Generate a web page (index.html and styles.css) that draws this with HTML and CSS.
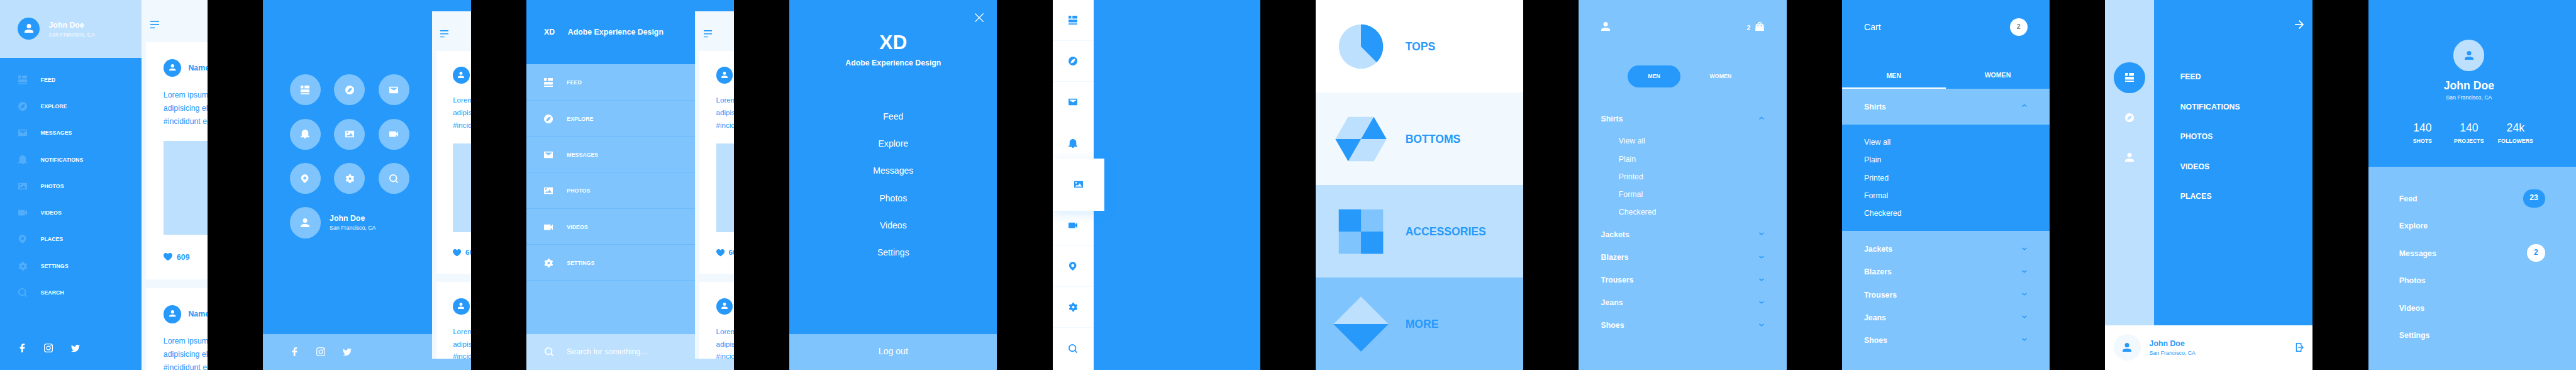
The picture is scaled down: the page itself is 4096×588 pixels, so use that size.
FILE: index.html
```html
<!DOCTYPE html>
<html lang="en">
<head>
<meta charset="utf-8">
<title>Mobile navigation screens</title>
<link rel="stylesheet" href="styles.css">
</head>
<body>
<svg class="sprite" aria-hidden="true">
  <symbol id="feed" viewBox="0 0 16 16"><path d="M0 0h5v5H0zM7 0h9v5H7zM0 7h16v5H0zM0 14h16v2H0z"/></symbol>
  <symbol id="compass" viewBox="0 0 16 16"><path fill-rule="evenodd" d="M8 0a8 8 0 1 1 0 16A8 8 0 0 1 8 0zM12.3 3.8C9.500 4.500 7.300 5.200 6.200 6.400 5.200 7.500 4.500 9.500 3.700 12.200 6.500 11.500 8.700 10.800 9.800 9.600 10.800 8.500 11.500 6.500 12.300 3.800z"/></symbol>
  <symbol id="mail" viewBox="0 0 16 16"><path fill-rule="evenodd" d="M1 2h14a1 1 0 0 1 1 1v10a1 1 0 0 1-1 1H1a1 1 0 0 1-1-1V3a1 1 0 0 1 1-1zM2 4v.8l6 3.900 6-3.900V4z"/></symbol>
  <symbol id="bell" viewBox="0 0 16 16"><path d="M2 11V6.500C2 2.500 4.500 0 8 0s6 2.500 6 6.500V11c0 .8 2 .8 2 1.800V14h-6c0 1.200-.8 2-2 2s-2-.8-2-2H0v-1.200c0-1 2-1 2-1.800z"/></symbol>
  <symbol id="photo" viewBox="0 0 16 16"><path fill-rule="evenodd" d="M.5 2h15a.5.5 0 0 1 .5.5v11a.5.5 0 0 1-.5.5H.5a.5.5 0 0 1-.5-.5v-11A.5.5 0 0 1 .5 2zM3.500 3.500a1.500 1.500 0 1 0 0 3 1.500 1.500 0 0 0 0-3zM2 12h12l-4-6-3 4-3-1z"/></symbol>
  <symbol id="video" viewBox="0 0 16 16"><path d="M.8 3h10.400a.8.8 0 0 1 .8.8V7l3.200-3.500.8-.3v9.600l-.8-.3L12 9v3.200a.8.8 0 0 1-.8.8H.8a.8.8 0 0 1-.8-.8V3.800A.8.8 0 0 1 .8 3z"/></symbol>
  <symbol id="pin" viewBox="0 0 16 16"><path fill-rule="evenodd" d="M7.600 0a6.600 6.600 0 0 1 6.600 6.600c0 4-4.600 7.600-6.600 9.400C5.600 14.200 1 10.600 1 6.600A6.600 6.600 0 0 1 7.600 0zM7.600 4a2.800 2.800 0 1 0 0 5.600 2.800 2.800 0 0 0 0-5.600z"/></symbol>
  <symbol id="gear" viewBox="-8.500 -8 16 16"><path fill-rule="evenodd" d="M-1.500-8h3l.5 2.100 2.100 1.200 2.100-.6 1.500 2.600-1.600 1.500v2.400l1.600 1.500-1.500 2.600-2.100-.6L2 5.900 1.500 8h-3L-2 5.900l-2.100-1.200-2.100.6-1.500-2.600 1.600-1.500v-2.400l-1.600-1.500 1.500-2.600 2.100.6L-2-5.900zM0-2.300a2.300 2.300 0 1 0 0 4.600 2.300 2.300 0 0 0 0-4.600z"/></symbol>
  <symbol id="search" viewBox="0 0 16 16"><g fill="none" stroke="currentColor" stroke-width="2"><circle cx="7" cy="7" r="6"/><path d="M11.300 11.300l4 4"/></g></symbol>
  <symbol id="person" viewBox="0 0 16 16"><circle cx="8" cy="4" r="4"/><path d="M0 16v-2c0-2.600 4-3.900 8-3.900s8 1.300 8 3.900v2z"/></symbol>
  <symbol id="heart" viewBox="0 0 16 14"><path d="M8 14C5 11.800 0 8.500 0 4.300 0 1.800 1.900 0 4.200 0 5.900 0 7.200.7 8 1.900 8.800.7 10.100 0 11.800 0 14.100 0 16 1.800 16 4.300 16 8.500 11 11.800 8 14z"/></symbol>
  <symbol id="facebook" viewBox="-3.700 0 16 16"><path d="M6 16V9h3l.4-3H6V4.200c0-.9.3-1.500 1.600-1.500h1.500V.1C8.800.1 7.900 0 6.900 0 4.500 0 2.900 1.400 2.900 4v2H.3v3h2.600v7z"/></symbol>
  <symbol id="instagram" viewBox="0 0 16 16"><g fill="none" stroke="currentColor" stroke-width="1.500"><rect x=".75" y=".75" width="14.500" height="14.500" rx="3.800"/><circle cx="8" cy="8" r="3.400"/></g><circle cx="12.300" cy="3.700" r="1"/></symbol>
  <symbol id="twitter" viewBox="0 0 16 16"><path d="M5.026 15c6.038 0 9.341-5.003 9.341-9.334 0-.14 0-.282-.006-.422A6.685 6.685 0 0 0 16 3.542a6.658 6.658 0 0 1-1.889.518 3.301 3.301 0 0 0 1.447-1.817 6.533 6.533 0 0 1-2.087.793A3.286 3.286 0 0 0 7.875 6.030a9.325 9.325 0 0 1-6.767-3.429 3.289 3.289 0 0 0 1.018 4.382A3.323 3.323 0 0 1 .64 6.575v.045a3.288 3.288 0 0 0 2.632 3.218 3.203 3.203 0 0 1-.865.115 3.230 3.230 0 0 1-.614-.057 3.283 3.283 0 0 0 3.067 2.277A6.588 6.588 0 0 1 .78 13.580a6.320 6.320 0 0 1-.78-.045A9.344 9.344 0 0 0 5.026 15z"/></symbol>
  <symbol id="bag" viewBox="0 0 16 16"><path fill-rule="evenodd" d="M1.500 4H4a4 4 0 0 1 8 0h2.500q.5 0 .6.500L16 15.300q0 .7-.7.7H.7q-.7 0-.7-.7L.9 4.500Q1 4 1.500 4zM6 4h4a2 2 0 0 0-4 0zM4 5.700v1.900h2V5.700zM10 5.700v1.900h2V5.700z"/></symbol>
  <symbol id="chevron" viewBox="0 0 9 6"><path fill="none" stroke="currentColor" stroke-width="1.800" d="M.6 1l3.900 3.300L8.400 1"/></symbol>
  <symbol id="close" viewBox="0 0 16 16"><path fill="none" stroke="currentColor" stroke-width="1.500" d="M.5.5l15 15M15.500.5l-15 15"/></symbol>
  <symbol id="arrow" viewBox="0 0 16 16"><path fill="none" stroke="currentColor" stroke-width="2" d="M0 8h14.500M7.500.8L14.700 8l-7.200 7.200"/></symbol>
  <symbol id="logout" viewBox="0 0 16 16"><path fill="none" stroke="currentColor" stroke-width="1.800" d="M11 3.500V.9H2.900v14.200H11v-2.600M6 8h9M10.600 3.900L14.700 8l-4.100 4.100"/></symbol>
  <symbol id="menu" viewBox="0 0 16 14"><path d="M0 0h16v2H0zM0 6h16v2H0zM0 12h8v2H0z"/></symbol>
</svg>

<main class="board">

  <section class="screen s1">
    <div class="s1-side">
      <header class="s1-head">
        <span class="disc disc40"><svg class="i"><use href="#person"/></svg></span>
        <div class="who"><b>John Doe</b><small>San Francisco, CA</small></div>
      </header>
      <nav class="s1-nav">
        <a><svg class="i"><use href="#feed"/></svg>FEED</a>
        <a><svg class="i"><use href="#compass"/></svg>EXPLORE</a>
        <a><svg class="i"><use href="#mail"/></svg>MESSAGES</a>
        <a><svg class="i"><use href="#bell"/></svg>NOTIFICATIONS</a>
        <a><svg class="i"><use href="#photo"/></svg>PHOTOS</a>
        <a><svg class="i"><use href="#video"/></svg>VIDEOS</a>
        <a><svg class="i"><use href="#pin"/></svg>PLACES</a>
        <a><svg class="i"><use href="#gear"/></svg>SETTINGS</a>
        <a><svg class="i"><use href="#search"/></svg>SEARCH</a>
      </nav>
      <footer class="social"><svg class="i"><use href="#facebook"/></svg><svg class="i"><use href="#instagram"/></svg><svg class="i"><use href="#twitter"/></svg></footer>
    </div>
    <div class="preview">
      <svg class="burger"><use href="#menu"/></svg>
      <article class="card">
        <div class="card-top"><span class="disc disc32"><svg class="i12"><use href="#person"/></svg></span><b>Name</b></div>
        <p>Lorem ipsum<br>adipisicing elit<br>#incididunt enim</p>
        <div class="pic"></div>
        <div class="likes"><svg class="heart"><use href="#heart"/></svg><b>609</b></div>
      </article>
      <article class="card">
        <div class="card-top"><span class="disc disc32"><svg class="i12"><use href="#person"/></svg></span><b>Name</b></div>
        <p>Lorem ipsum<br>adipisicing elit<br>#incididunt enim</p>
      </article>
    </div>
  </section>

  <section class="screen s2">
    <div class="s2-body">
      <div class="s2-grid">
        <span class="disc disc56 mid"><svg class="i"><use href="#feed"/></svg></span>
        <span class="disc disc56 mid"><svg class="i"><use href="#compass"/></svg></span>
        <span class="disc disc56 mid"><svg class="i"><use href="#mail"/></svg></span>
        <span class="disc disc56 mid"><svg class="i"><use href="#bell"/></svg></span>
        <span class="disc disc56 mid"><svg class="i"><use href="#photo"/></svg></span>
        <span class="disc disc56 mid"><svg class="i"><use href="#video"/></svg></span>
        <span class="disc disc56 mid"><svg class="i"><use href="#pin"/></svg></span>
        <span class="disc disc56 mid"><svg class="i"><use href="#gear"/></svg></span>
        <span class="disc disc56 mid"><svg class="i"><use href="#search"/></svg></span>
      </div>
      <div class="s2-user"><span class="disc disc56 mid"><svg class="i"><use href="#person"/></svg></span><div class="who"><b>John Doe</b><small>San Francisco, CA</small></div></div>
    </div>
    <footer class="bar64 social"><svg class="i"><use href="#facebook"/></svg><svg class="i"><use href="#instagram"/></svg><svg class="i"><use href="#twitter"/></svg></footer>
    <div class="preview floating">
      <svg class="burger"><use href="#menu"/></svg>
      <article class="card">
        <div class="card-top"><span class="disc disc32"><svg class="i12"><use href="#person"/></svg></span></div>
        <p>Lorem ipsum<br>adipisicing elit<br>#incididunt enim</p>
        <div class="pic"></div>
        <div class="likes"><svg class="heart"><use href="#heart"/></svg><b>609</b></div>
      </article>
      <article class="card">
        <div class="card-top"><span class="disc disc32"><svg class="i12"><use href="#person"/></svg></span></div>
        <p>Lorem ipsum<br>adipisicing elit<br>#incididunt enim</p>
      </article>
    </div>
  </section>

  <section class="screen s3">
    <header class="s3-head"><b class="s3-logo">XD</b><b>Adobe Experience Design</b></header>
    <nav class="s3-nav">
      <a><svg class="i"><use href="#feed"/></svg>FEED</a>
      <a><svg class="i"><use href="#compass"/></svg>EXPLORE</a>
      <a><svg class="i"><use href="#mail"/></svg>MESSAGES</a>
      <a><svg class="i"><use href="#photo"/></svg>PHOTOS</a>
      <a><svg class="i"><use href="#video"/></svg>VIDEOS</a>
      <a><svg class="i"><use href="#gear"/></svg>SETTINGS</a>
    </nav>
    <footer class="bar64 s3-search"><svg class="i"><use href="#search"/></svg>Search for something…</footer>
    <div class="preview floating">
      <svg class="burger"><use href="#menu"/></svg>
      <article class="card">
        <div class="card-top"><span class="disc disc32"><svg class="i12"><use href="#person"/></svg></span></div>
        <p>Lorem ipsum<br>adipisicing elit<br>#incididunt enim</p>
        <div class="pic"></div>
        <div class="likes"><svg class="heart"><use href="#heart"/></svg><b>609</b></div>
      </article>
      <article class="card">
        <div class="card-top"><span class="disc disc32"><svg class="i12"><use href="#person"/></svg></span></div>
        <p>Lorem ipsum<br>adipisicing elit<br>#incididunt enim</p>
      </article>
    </div>
  </section>

  <section class="screen s4">
    <svg class="i s4-close"><use href="#close"/></svg>
    <b class="s4-logo">XD</b>
    <b class="s4-name">Adobe Experience Design</b>
    <nav class="s4-nav"><a>Feed</a><a>Explore</a><a>Messages</a><a>Photos</a><a>Videos</a><a>Settings</a></nav>
    <footer class="bar64 s4-out">Log out</footer>
  </section>

  <section class="screen s5">
    <nav class="s5-rail">
      <a><svg class="i"><use href="#feed"/></svg></a>
      <a><svg class="i"><use href="#compass"/></svg></a>
      <a><svg class="i"><use href="#mail"/></svg></a>
      <a><svg class="i"><use href="#bell"/></svg></a>
      <a class="active"><svg class="i"><use href="#photo"/></svg></a>
      <a><svg class="i"><use href="#video"/></svg></a>
      <a><svg class="i"><use href="#pin"/></svg></a>
      <a><svg class="i"><use href="#gear"/></svg></a>
      <a><svg class="i"><use href="#search"/></svg></a>
    </nav>
  </section>

  <section class="screen s6">
    <div class="cat cat1"><svg class="shape" viewBox="-50 -50 100 100"><circle class="f3" r="40"/><path class="f1" d="M0 0V-40A40 40 0 0 1 28.280 28.280z"/></svg>TOPS</div>
    <div class="cat cat2"><svg class="shape" viewBox="-50 -50 100 100"><path class="f3" d="M-46.200 0l23.100-40h46.200L46.200 0 23.100 40h-46.200z"/><path class="f1" d="M0 0l23.100-40L46.200 0zM0 0l-23.100 40L-46.200 0z"/></svg>BOTTOMS</div>
    <div class="cat cat3"><svg class="shape" viewBox="-50 -50 100 100"><path class="f2" d="M-40-40h80v80h-80z"/><path class="f1" d="M-40-40H0V0h-40zM0 0h40v40H0z"/></svg>ACCESSORIES</div>
    <div class="cat cat4"><svg class="shape" viewBox="-50 -50 100 100"><path class="f3" d="M-49.700 0L0-49.700 49.700 0z"/><path class="f1" d="M-49.700 0L0 49.700 49.700 0z"/></svg>MORE</div>
  </section>

  <section class="screen s7">
    <header class="s7-head"><svg class="i"><use href="#person"/></svg><span class="s7-bag"><b>2</b><svg class="i"><use href="#bag"/></svg></span></header>
    <div class="s7-tabs"><b class="on">MEN</b><b>WOMEN</b></div>
    <div class="acc">
      <div class="acc-row open">Shirts<svg class="chev"><use href="#chevron"/></svg></div>
      <div class="acc-sub indent"><a>View all</a><a>Plain</a><a>Printed</a><a>Formal</a><a>Checkered</a></div>
      <div class="acc-row">Jackets<svg class="chev"><use href="#chevron"/></svg></div>
      <div class="acc-row">Blazers<svg class="chev"><use href="#chevron"/></svg></div>
      <div class="acc-row">Trousers<svg class="chev"><use href="#chevron"/></svg></div>
      <div class="acc-row">Jeans<svg class="chev"><use href="#chevron"/></svg></div>
      <div class="acc-row">Shoes<svg class="chev"><use href="#chevron"/></svg></div>
    </div>
  </section>

  <section class="screen s8">
    <header class="s8-head">Cart<b class="badge gray">2</b></header>
    <div class="s8-tabs"><b class="on">MEN</b><b>WOMEN</b></div>
    <div class="acc-row open strip">Shirts<svg class="chev"><use href="#chevron"/></svg></div>
    <div class="acc-sub s8-sub"><a>View all</a><a>Plain</a><a>Printed</a><a>Formal</a><a>Checkered</a></div>
    <div class="s8-rest">
      <div class="acc-row">Jackets<svg class="chev"><use href="#chevron"/></svg></div>
      <div class="acc-row">Blazers<svg class="chev"><use href="#chevron"/></svg></div>
      <div class="acc-row">Trousers<svg class="chev"><use href="#chevron"/></svg></div>
      <div class="acc-row">Jeans<svg class="chev"><use href="#chevron"/></svg></div>
      <div class="acc-row">Shoes<svg class="chev"><use href="#chevron"/></svg></div>
    </div>
  </section>

  <section class="screen s9">
    <div class="s9-top">
      <nav class="s9-rail">
        <span class="disc disc56"><svg class="i"><use href="#feed"/></svg></span>
        <span class="s9-cell"><svg class="i"><use href="#compass"/></svg></span>
        <span class="s9-cell"><svg class="i"><use href="#person"/></svg></span>
      </nav>
      <div class="s9-main">
        <svg class="i s9-arrow"><use href="#arrow"/></svg>
        <nav class="s9-nav"><a>FEED</a><a>NOTIFICATIONS</a><a>PHOTOS</a><a>VIDEOS</a><a>PLACES</a></nav>
      </div>
    </div>
    <footer class="s9-foot">
      <span class="disc disc48"><svg class="i"><use href="#person"/></svg></span>
      <div class="who"><b>John Doe</b><small>San Francisco, CA</small></div>
      <svg class="i s9-out"><use href="#logout"/></svg>
    </footer>
  </section>

  <section class="screen s10">
    <header class="s10-head">
      <span class="disc disc56 pale"><svg class="i"><use href="#person"/></svg></span>
      <b class="s10-name">John Doe</b>
      <small>San Francisco, CA</small>
      <div class="s10-stats">
        <div><span>140</span><b>SHOTS</b></div>
        <div><span>140</span><b>PROJECTS</b></div>
        <div><span>24k</span><b>FOLLOWERS</b></div>
      </div>
    </header>
    <nav class="s10-nav">
      <a>Feed<b class="badge blue">23</b></a>
      <a>Explore</a>
      <a>Messages<b class="badge">2</b></a>
      <a>Photos</a>
      <a>Videos</a>
      <a>Settings</a>
    </nav>
  </section>

</main>
</body>
</html>
```
FILE: styles.css
```css
:root {
  --blue: #2699fb;
  --sky: #7fc4fd;
  --pale: #bce0fd;
  --mist: #f1f9ff;
}
* { box-sizing: border-box; }
html, body { margin: 0; background: #000; overflow: hidden; }
.board {
  zoom: 0.88086;
  display: flex;
  gap: 100px;
  width: 4650px;
  height: 668px;
  font: 14px/16px "Liberation Sans", Arial, sans-serif;
  color: #fff;
}
.sprite { display: none; }
svg { display: block; flex: none; fill: currentColor; overflow: visible; }
.i { width: 16px; height: 16px; }
.i12 { width: 12px; height: 12px; }
.screen {
  position: relative;
  flex: none;
  width: 375px;
  height: 668px;
  overflow: hidden;
  display: flex;
  flex-direction: column;
  background: var(--blue);
}

/* Shared pieces */
.disc {
  flex: none;
  display: flex;
  align-items: center;
  justify-content: center;
  border-radius: 50%;
  background: var(--blue);
}
.disc32 { width: 32px; height: 32px; padding-bottom: 2px; }
.disc40 { width: 40px; height: 40px; padding-bottom: 2px; }
.disc48 { width: 48px; height: 48px; }
.disc56 { width: 56px; height: 56px; }
.disc.mid { background: var(--sky); }
.disc.pale { background: var(--pale); color: var(--blue); }
.who { display: flex; flex-direction: column; gap: 3px; white-space: nowrap; }
small { font-size: 10px; line-height: 12px; }
.social { display: flex; gap: 32px; }
.bar64 {
  height: 65px;
  flex: none;
  margin-top: auto;
  padding: 24px 48px 0;
  background: var(--sky);
}

/* Feed preview */
.preview {
  flex: 1;
  background: var(--mist);
  color: var(--blue);
  padding: 37px 0 0 8px;
  overflow: hidden;
  white-space: nowrap;
}
.preview.floating {
  position: absolute;
  left: 324.500px;
  top: 21.300px;
  width: 80px;
  height: 667px;
  zoom: 0.94;
}
.burger { width: 16px; height: 14px; margin: 0 0 25px 8px; }
.card { background: #fff; height: 428px; margin-bottom: 16px; padding: 31px 0 0 32px; }
.card-top { display: flex; align-items: center; gap: 13px; height: 32px; }
.card-top .disc { color: #fff; }
.card p { margin: 21px 0 22px; line-height: 24px; }
.pic { height: 170px; background: var(--pale); }
.likes { display: flex; align-items: center; gap: 8px; margin-top: 32px; }
.heart { width: 16px; height: 14px; }

/* 1: profile drawer */
.s1 { flex-direction: row; }
.s1-side { width: 255px; display: flex; flex-direction: column; }
.s1-head {
  height: 104px;
  display: flex;
  align-items: center;
  gap: 16px;
  padding-left: 32px;
  background: var(--pale);
}
.s1-head .who { padding-top: 3px; }
.s1-nav { padding: 16px 0 0 33px; font-size: 10px; font-weight: bold; }
.s1-nav a { display: flex; align-items: center; gap: 24.300px; height: 48px; }
.s1-nav .i { opacity: 0.2; }
.s1 .social { margin: auto 0 32px 32px; }

/* 2: icon grid */
.s2-body { padding: 134px 0 0 48px; display: flex; flex-direction: column; gap: 24px; }
.s2-grid { display: grid; grid-template-columns: repeat(3, 56px); gap: 24px; }
.s2-user { display: flex; align-items: center; gap: 16px; }

/* 3: list drawer */
.s3 { background: var(--sky); }
.s3-head { height: 116px; display: flex; align-items: center; padding-left: 32px; background: var(--blue); }
.s3-logo { width: 43px; }
.s3-nav { font-size: 10px; font-weight: bold; }
.s3-nav a {
  display: flex;
  align-items: center;
  gap: 25.300px;
  height: 65.100px;
  padding: 2px 0 0 32px;
  border-bottom: 1px solid #6cbafd;
}
.s3-search { display: flex; gap: 24px; padding-left: 33px; background: var(--pale); }

/* 4: full-screen menu */
.s4 { align-items: center; }
.s4-close { margin: 24px 24px 0 auto; }
.s4-logo { font-size: 36px; line-height: 40px; margin-top: 17px; }
.s4-name { margin: 9px 0 0; }
.s4-nav { margin-top: 63.800px; text-align: center; font-size: 16px; line-height: 49.200px; }
.s4-nav a { display: block; }
.s4-out { width: 100%; padding: 23px 0 0; text-align: center; font-size: 16px; line-height: 18px; }

/* 5: icon rail */
.s5-rail { width: 74px; height: 668px; background: #fff; color: var(--blue); }
.s5-rail a {
  display: flex;
  align-items: center;
  justify-content: center;
  height: 74px;
  border-bottom: 1px solid var(--mist);
}
.s5-rail a:last-child { border: 0; }
.s5-rail .active {
  position: relative;
  width: 94px;
  height: 94px;
  margin: -10px 0;
  border: 0;
  background: #fff;
  box-shadow: 0 6px 20px rgba(38, 153, 251, 0.2);
}

/* 6: categories */
.cat {
  flex: 1;
  display: flex;
  align-items: center;
  gap: 30px;
  padding-left: 32px;
  font-size: 20px;
  font-weight: bold;
  color: var(--blue);
}
.shape { width: 100px; height: 100px; }
.f1 { fill: var(--blue); }
.f2 { fill: var(--sky); }
.f3 { fill: var(--pale); }
.cat1 { background: #fff; }
.cat2 { background: var(--mist); }
.cat3 { background: var(--pale); }
.cat4 { background: var(--sky); }

/* 7 and 8: shop menus */
.s7 { background: var(--sky); }
.s7-head { display: flex; justify-content: space-between; padding: 40px 40px 0; }
.s7-bag { display: flex; gap: 9px; }
.s7-bag b { font-size: 12px; padding-top: 2px; }
.s7-tabs { display: flex; gap: 24px; margin: 60px 0 36px 88px; font-size: 10px; text-align: center; line-height: 40px; }
.s7-tabs b { width: 96px; border-radius: 20px; }
.s7-tabs .on { background: var(--blue); }
.acc-row {
  display: flex;
  align-items: center;
  justify-content: space-between;
  height: 41px;
  padding: 0 41px 0 40px;
  font-weight: bold;
}
.chev { width: 9px; height: 6px; color: var(--blue); margin-bottom: 2px; }
.open .chev { transform: scaleY(-1); margin-bottom: 4px; }
.acc-sub { padding-left: 40px; line-height: 32px; }
.acc-sub a { display: block; }
.acc-sub.indent { padding: 4px 0 4px 72px; }

.s8-head {
  display: flex;
  align-items: center;
  justify-content: space-between;
  height: 32px;
  margin: 33px 40px 0;
  font-size: 16px;
}
.badge {
  display: block;
  min-width: 32px;
  padding: 0 12px;
  border-radius: 16px;
  background: #fff;
  color: var(--blue);
  font-size: 14px;
  line-height: 31px;
  height: 32px;
  text-align: center;
}
.badge.blue { background: var(--blue); color: #fff; }
.badge.gray { color: #808080; font-size: 12px; }
.s8-tabs { display: flex; height: 48px; margin-top: 47px; font-size: 12px; text-align: center; }
.s8-tabs b { flex: 1; line-height: 46px; }
.s8-tabs .on { line-height: 49px; border-bottom: 2.300px solid #fff; }
.strip { height: 65px; background: var(--sky); }
.s8-sub { padding-top: 16px; height: 192px; }
.s8-rest { flex: 1; padding-top: 12.500px; background: var(--sky); }

/* 9: two-level drawer */
.s9-top { display: flex; height: 587px; }
.s9-rail { width: 88px; padding: 112px 16px 0; background: var(--pale); display: flex; flex-direction: column; gap: 16px; }
.s9-cell { display: flex; align-items: center; justify-content: center; height: 56px; }
.s9-main { flex: 1; }
.s9-arrow { margin: 36px 16px 0 auto; }
.s9-nav { margin: 60.500px 0 0 47.700px; font-weight: bold; line-height: 54px; }
.s9-nav a { display: block; }
.s9-foot { flex: 1; display: flex; gap: 16px; padding: 16px 16px 0; background: #fff; color: var(--blue); }
.s9-foot .disc { background: var(--mist); }
.s9-foot .who { padding-top: 9px; }
.s9-out { margin: 16px 0 0 auto; }

/* 10: profile menu */
.s10 { background: var(--sky); }
.s10-head { height: 301px; padding: 72px 11px 0 0; background: var(--blue); display: flex; flex-direction: column; align-items: center; }
.s10-name { font-size: 20px; line-height: 24px; margin: 15px 0 3px; }
.s10-stats { display: grid; grid-template-columns: repeat(3, 84px); margin-top: 37px; text-align: center; }
.s10-stats span { display: block; font-size: 20px; line-height: 24px; }
.s10-stats b { display: block; font-size: 10px; line-height: 12px; margin-top: 6px; }
.s10-nav { padding: 33px 56px 0 56px; font-weight: bold; }
.s10-nav a { display: flex; align-items: center; justify-content: space-between; height: 49.300px; }
.s10-nav .badge { position: relative; top: -0.500px; }
```
